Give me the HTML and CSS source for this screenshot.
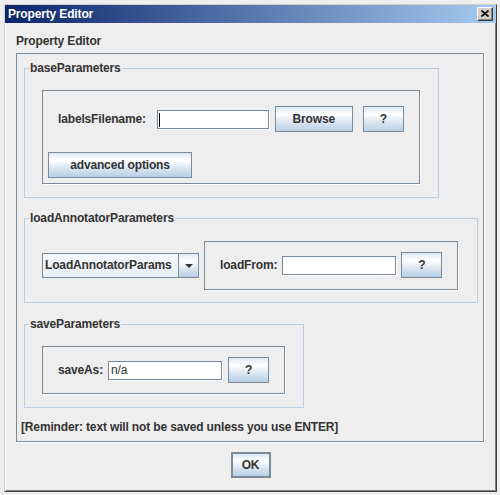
FILE: index.html
```html
<!DOCTYPE html>
<html>
<head>
<meta charset="utf-8">
<title>Property Editor</title>
<link rel="stylesheet" href="styles.css">
</head>
<body>
<div class="dialog">
  <div class="titlebar">
    <span class="title">Property Editor</span>
    <button class="close" aria-label="Close">
      <svg width="8" height="7" viewBox="0 0 8 7"><path d="M0.5 0.5 L7.5 6.5 M7.5 0.5 L0.5 6.5" stroke="#000" stroke-width="1.6" fill="none"/></svg>
    </button>
  </div>
  <div class="content">
    <div class="heading">Property Editor</div>
    <div class="outer">
      <fieldset class="group">
        <legend>baseParameters</legend>
        <div class="group-body panel base-panel">
          <div class="row">
            <label class="lbl lbl-labels">labelsFilename:</label>
            <span class="field-wrap"><input class="field field-labels" type="text" value=""></span>
            <button class="btn btn-browse">Browse</button>
            <button class="btn btn-help btn-help-base">?</button>
          </div>
          <button class="btn btn-adv">advanced options</button>
        </div>
      </fieldset>
      <fieldset class="group group-load">
        <legend>loadAnnotatorParameters</legend>
        <div class="group-body load-row">
          <div class="combo">
            <span class="combo-value">LoadAnnotatorParams</span>
            <span class="combo-arrow"><span class="tri"></span></span>
          </div>
          <div class="panel load-panel">
            <label class="lbl lbl-load">loadFrom:</label>
            <input class="field field-load" type="text" value="">
            <button class="btn btn-help btn-help-load">?</button>
          </div>
        </div>
      </fieldset>
      <fieldset class="group group-save">
        <legend>saveParameters</legend>
        <div class="group-body panel save-panel">
          <label class="lbl lbl-save">saveAs:</label>
          <input class="field field-save" type="text" value="n/a">
          <button class="btn btn-help btn-help-save">?</button>
        </div>
      </fieldset>
      <div class="reminder">[Reminder: text will not be saved unless you use ENTER]</div>
    </div>
    <div class="footer">
      <button class="btn btn-ok">OK</button>
    </div>
  </div>
</div>
</body>
</html>
```
FILE: styles.css
```css
* { box-sizing: border-box; }
html, body { margin: 0; padding: 0; }
body {
  width: 500px;
  height: 495px;
  overflow: hidden;
  background: #eeeeee;
  padding: 4px 3px 3px 4px;
  font-family: "Liberation Sans", Arial, sans-serif;
  font-size: 12px;
  line-height: 15px;
  letter-spacing: -0.15px;
  color: #333333;
}
.dialog {
  width: 493px;
  height: 488px;
  display: flex;
  flex-direction: column;
  background: #eeeeee;
  border: 1px solid;
  border-color: #d4d0c8 #404040 #404040 #d4d0c8;
  box-shadow: inset 1px 1px 0 #ffffff, inset -1px -1px 0 #808080;
}
.titlebar {
  height: 18px;
  flex: none;
  display: flex;
  align-items: center;
  justify-content: space-between;
  background: linear-gradient(to right, #0a246a, #a6caf0);
  padding-left: 3px;
  padding-right: 3px;
}
.title {
  color: #ffffff;
  font-weight: bold;
}
.close {
  width: 16px;
  height: 14px;
  padding: 0;
  margin: 0;
  display: flex;
  align-items: center;
  justify-content: center;
  background: #d4d0c8;
  border: 1px solid;
  border-color: #ffffff #404040 #404040 #ffffff;
  box-shadow: inset -1px -1px 0 #808080;
}
.close svg { display: block; margin-top: -1px; }
.content {
  flex: 1;
  display: flex;
  flex-direction: column;
  padding: 11px 12px 13px 11px;
}
.heading { font-weight: bold; }
.outer {
  margin-top: 4px;
  border: 1px solid #7a8a99;
  box-shadow: 1px 1px 0 #ffffff;
  padding: 7px 0 6px 4px;
  display: flex;
  flex-direction: column;
  align-items: flex-start;
}
.group {
  margin: 0 0 0 3px;
  border: 1px solid #b8cfe5;
  padding: 14px 18px 13px 0;
  min-width: 0;
}
.group legend {
  margin-left: 4px;
  padding: 0 1px;
  font-weight: bold;
  line-height: 15px;
}
.group-load { margin-top: 13px; padding-top: 15px; padding-bottom: 12px; padding-right: 19px; }
.group-save { margin-top: 14px; }
.group-body { margin-left: 17px; }
.panel {
  border: 1px solid #7a8a99;
  box-shadow: 1px 1px 0 #ffffff;
}
.base-panel {
  padding: 15px 15px 5px 5px;
  display: flex;
  flex-direction: column;
  align-items: flex-start;
  gap: 20px;
}
.row {
  margin-left: 10px;
  display: flex;
  align-items: center;
}
.lbl { font-weight: bold; white-space: nowrap; }
.lbl-labels { margin-right: 11px; }
.lbl-load { margin-right: 5px; }
.lbl-save { margin-right: 5px; }
.field-wrap { position: relative; display: block; }
.field-wrap::after {
  content: "";
  position: absolute;
  left: 2px;
  top: 3px;
  width: 1px;
  height: 14px;
  background: #000000;
}
.field {
  display: block;
  height: 19px;
  margin: 0;
  padding: 0 2px;
  border: 1px solid #7a8a99;
  box-shadow: 1px 1px 0 #ffffff;
  background: #ffffff;
  font-family: "Liberation Sans", Arial, sans-serif;
  font-size: 12px;
  letter-spacing: -0.15px;
  color: #333333;
  outline: none;
}
.field-labels { width: 112px; }
.field-load { width: 114px; }
.field-save { width: 114px; }
.btn {
  height: 26px;
  margin: 0;
  padding: 0;
  border: 1px solid #7a8a99;
  background: linear-gradient(to bottom, #dde8f3 0%, #ffffff 30%, #dde8f3 60%, #b8cfe5 100%);
  font-family: "Liberation Sans", Arial, sans-serif;
  font-size: 12px;
  letter-spacing: -0.15px;
  font-weight: bold;
  color: #333333;
}
.btn-browse { width: 78px; margin-left: 6px; }
.btn-help { width: 41px; }
.btn-help-base { margin-left: 10px; }
.btn-help-load { margin-left: 5px; }
.btn-help-save { margin-left: 6px; }
.btn-adv { width: 144px; }
.load-row {
  display: flex;
  align-items: center;
  gap: 5px;
}
.combo {
  width: 157px;
  height: 25px;
  display: flex;
  border: 1px solid #7a8a99;
  background: linear-gradient(to bottom, #f4f8fb, #e8eef5);
}
.combo-value {
  flex: 1;
  padding-left: 2px;
  font-weight: bold;
  line-height: 23px;
  white-space: nowrap;
  overflow: hidden;
}
.combo-arrow {
  width: 20px;
  border-left: 1px solid #7a8a99;
  display: flex;
  align-items: center;
  justify-content: center;
  background: linear-gradient(to bottom, #dde8f3 0%, #ffffff 30%, #dde8f3 60%, #b8cfe5 100%);
}
.tri {
  width: 0;
  height: 0;
  border-left: 4px solid transparent;
  border-right: 4px solid transparent;
  border-top: 4px solid #333333;
}
.load-panel {
  padding: 10px 15px 11px 15px;
  display: flex;
  align-items: center;
}
.save-panel {
  padding: 10px 15px 10px 15px;
  display: flex;
  align-items: center;
}
.reminder {
  margin-top: 12px;
  font-weight: bold;
  white-space: nowrap;
}
.footer {
  margin-top: 10px;
  display: flex;
  justify-content: center;
  padding-left: 1px;
}
.btn-ok {
  width: 40px;
  border: 2px solid #7a8a99;
}
```
